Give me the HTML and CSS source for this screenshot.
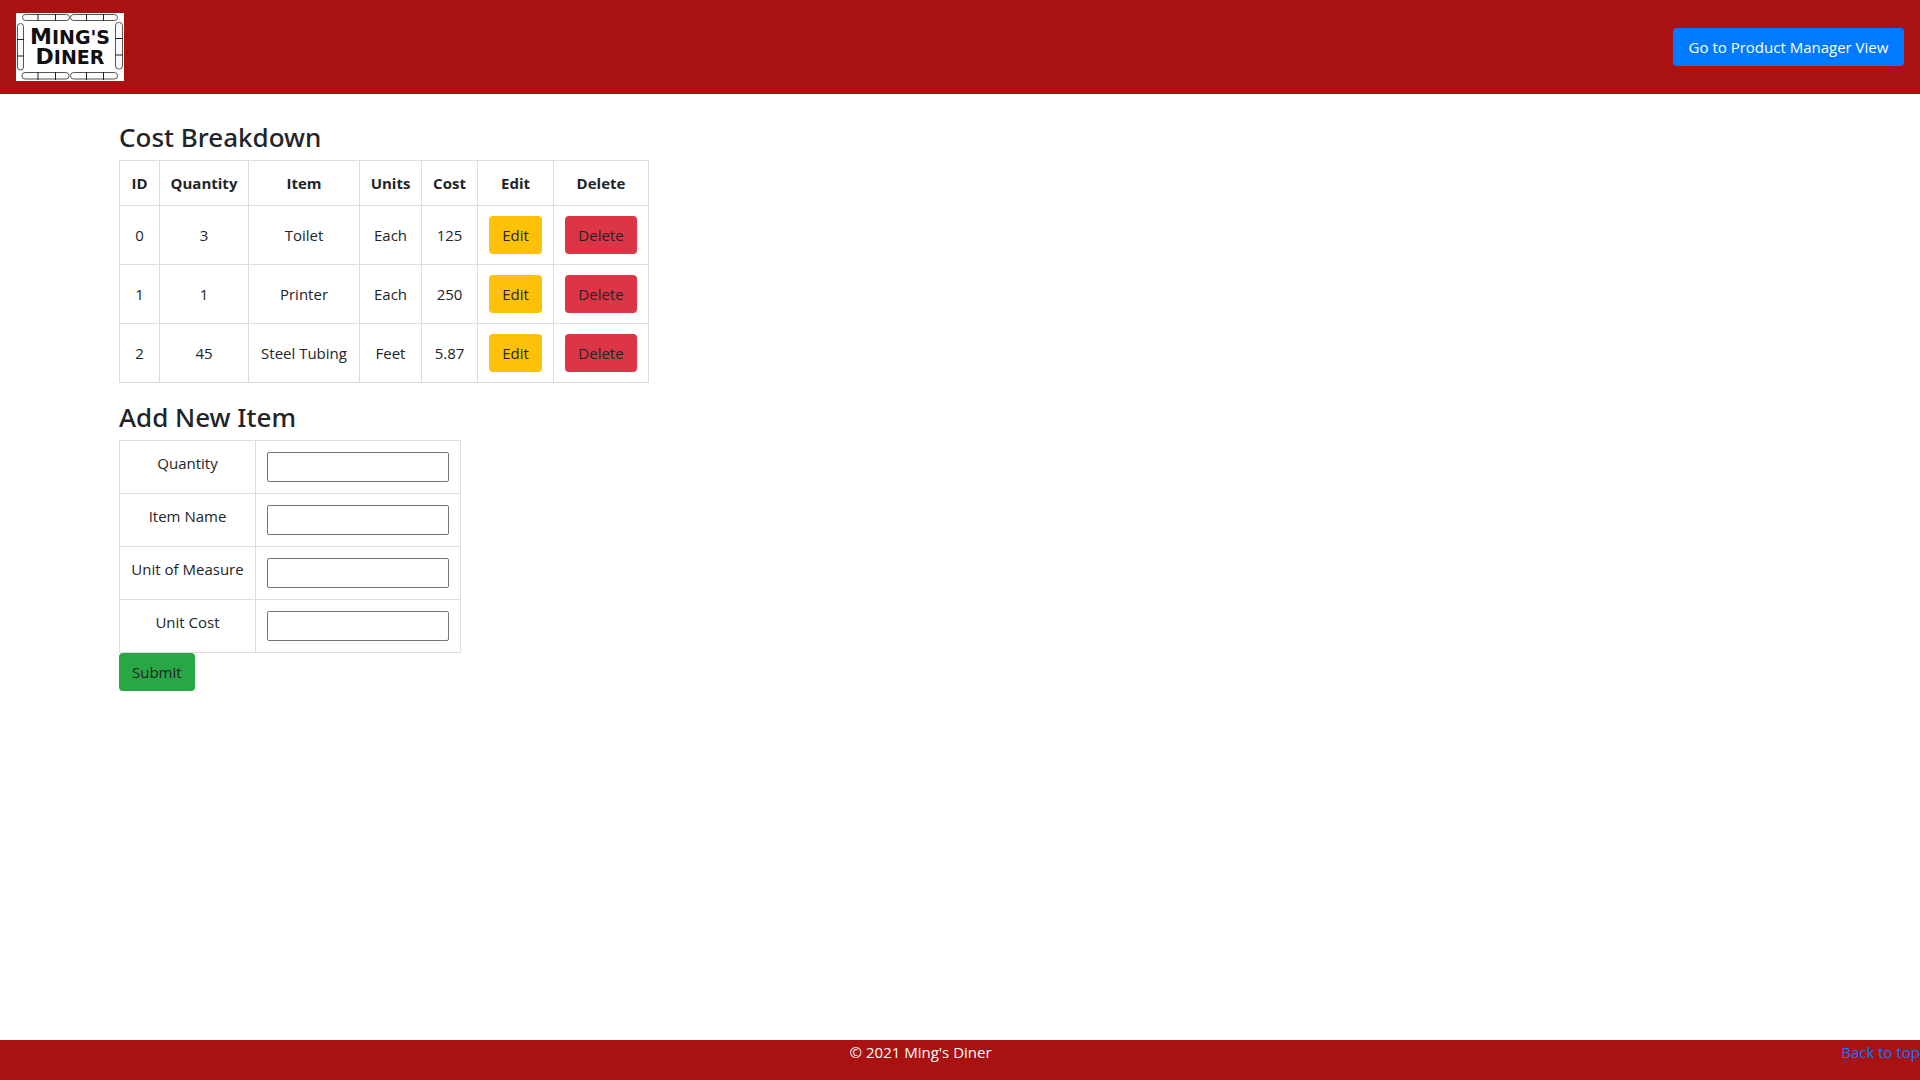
FILE: index.html
```html
<!DOCTYPE html>
<html lang="en">
<head>
<meta charset="utf-8">
<title>Ming's Diner - Cost Breakdown</title>
<link rel="stylesheet" href="styles.css">
</head>
<body>
<header class="site-header" id="top">
  <svg class="logo" viewBox="0 0 108 68" role="img" aria-label="Ming's Diner">
    <rect width="108" height="68" fill="#fff"/>
    <g class="bamboo">
      <rect x="6.500" y="1.500" width="47" height="6" rx="3"/>
      <rect x="54.500" y="1.500" width="47" height="6" rx="3"/>
      <rect x="6" y="59.500" width="47" height="6.500" rx="3"/>
      <rect x="54.500" y="59.500" width="47" height="6.500" rx="3"/>
      <rect x="1.500" y="10.500" width="6" height="46.500" rx="3"/>
      <rect x="99.500" y="9.500" width="7" height="46.500" rx="3"/>
    </g>
    <path class="joints" d="M22 1v7M39.500 1v7M70.500 1v7M87.500 1v7M22 59v8M39.500 59v8M70.500 59v8M87.500 59v8M1 26.500h7M1 43h7M99 25.500h8M99 42h8"/>
    <text class="logo-text" x="54" y="31">M<tspan class="small-cap">ING'S</tspan></text>
    <text class="logo-text" x="54" y="51">D<tspan class="small-cap">INER</tspan></text>
  </svg>
  <a class="btn btn-primary" href="#manager">Go to Product Manager View</a>
</header>

<main class="content">
  <h3 class="title">Cost Breakdown</h3>
  <table class="grid costs">
    <colgroup>
      <col class="col-id"><col class="col-quantity"><col class="col-item"><col class="col-units"><col class="col-cost"><col class="col-edit"><col class="col-delete">
    </colgroup>
    <thead>
      <tr><th>ID</th><th>Quantity</th><th>Item</th><th>Units</th><th>Cost</th><th>Edit</th><th>Delete</th></tr>
    </thead>
    <tbody>
      <tr><td>0</td><td>3</td><td>Toilet</td><td>Each</td><td>125</td><td><button class="btn btn-warning" type="button">Edit</button></td><td><button class="btn btn-danger" type="button">Delete</button></td></tr>
      <tr><td>1</td><td>1</td><td>Printer</td><td>Each</td><td>250</td><td><button class="btn btn-warning" type="button">Edit</button></td><td><button class="btn btn-danger" type="button">Delete</button></td></tr>
      <tr><td>2</td><td>45</td><td>Steel Tubing</td><td>Feet</td><td>5.87</td><td><button class="btn btn-warning" type="button">Edit</button></td><td><button class="btn btn-danger" type="button">Delete</button></td></tr>
    </tbody>
  </table>

  <h3 class="title">Add New Item</h3>
  <form>
    <table class="grid fields">
      <colgroup><col class="col-label"><col class="col-input"></colgroup>
      <tbody>
        <tr><td><label for="quantity">Quantity</label></td><td><input class="field" id="quantity" type="text"></td></tr>
        <tr><td><label for="item-name">Item Name</label></td><td><input class="field" id="item-name" type="text"></td></tr>
        <tr><td><label for="unit">Unit of Measure</label></td><td><input class="field" id="unit" type="text"></td></tr>
        <tr><td><label for="unit-cost">Unit Cost</label></td><td><input class="field" id="unit-cost" type="text"></td></tr>
      </tbody>
    </table>
    <button class="btn btn-success" type="button">Submit</button>
  </form>
</main>

<footer class="site-footer">
  <p class="copyright">© 2021 Ming's Diner</p>
  <a class="back" href="#top">Back to top</a>
</footer>
</body>
</html>
```

FILE: styles.css
```css
* {
  box-sizing: border-box;
}

body {
  display: flex;
  flex-direction: column;
  min-height: 100vh;
  margin: 0;
  background: #fff;
  color: #212529;
  font-family: "Segoe UI", "Open Sans", "Noto Sans", sans-serif;
  font-size: 15px;
  line-height: 24px;
}

.site-header {
  display: flex;
  align-items: center;
  justify-content: space-between;
  padding: 13px 16px;
  background: #aa1111;
}

.logo {
  display: block;
  width: 108px;
  height: 68px;
}

.bamboo {
  fill: #fafafa;
  stroke: #555;
}

.joints {
  fill: none;
  stroke: #222;
}

.logo-text {
  fill: #111;
  font-family: "DejaVu Sans", sans-serif;
  font-size: 22px;
  font-weight: 700;
  text-anchor: middle;
}

.small-cap {
  font-size: 19px;
}

.btn {
  display: inline-block;
  padding: 6px 12px;
  border: 1px solid transparent;
  border-radius: 4px;
  color: #212529;
  font: inherit;
  text-align: center;
  text-decoration: none;
  vertical-align: middle;
  cursor: pointer;
}

.btn-primary {
  min-width: 231px;
  background: #007bff;
  color: #fff;
}

.btn-warning {
  background: #ffc107;
}

.btn-danger {
  background: #dc3545;
}

.btn-success {
  display: block;
  background: #28a745;
}

.content {
  flex: 1;
  width: 100%;
  padding: 9px 119px 32px;
}

.title {
  margin: 18px 0 6px;
  font-family: "Segoe UI", "Noto Sans", sans-serif;
  font-size: 26px;
  font-weight: 500;
  line-height: 33px;
}

.grid {
  border-collapse: collapse;
  table-layout: fixed;
  text-align: center;
}

.grid th,
.grid td {
  padding: 10px 0;
  border: 1px solid #dddddd;
}

.grid th {
  font-weight: 700;
}

.costs {
  width: 530px;
}

.fields {
  width: 342px;
}

.fields td {
  padding: 11px 0;
  vertical-align: top;
}

.fields td:first-child {
  padding-top: 10px;
}

.col-id { width: 40px; }
.col-quantity { width: 89px; }
.col-item { width: 111px; }
.col-units { width: 62px; }
.col-cost { width: 56px; }
.col-edit { width: 76px; }
.col-delete { width: 95px; }
.col-label { width: 136px; }
.col-input { width: 205px; }

.field {
  display: block;
  width: 182px;
  height: 30px;
  margin: 0 auto;
  border: 1px solid #767676;
  border-radius: 2px;
  font: inherit;
}

.site-footer {
  display: flex;
  height: 40px;
  background: #aa1111;
}

.copyright {
  flex: 1;
  margin: 0;
  color: #fff;
  text-align: center;
}

.back {
  color: #007bff;
  text-decoration: none;
}
```
